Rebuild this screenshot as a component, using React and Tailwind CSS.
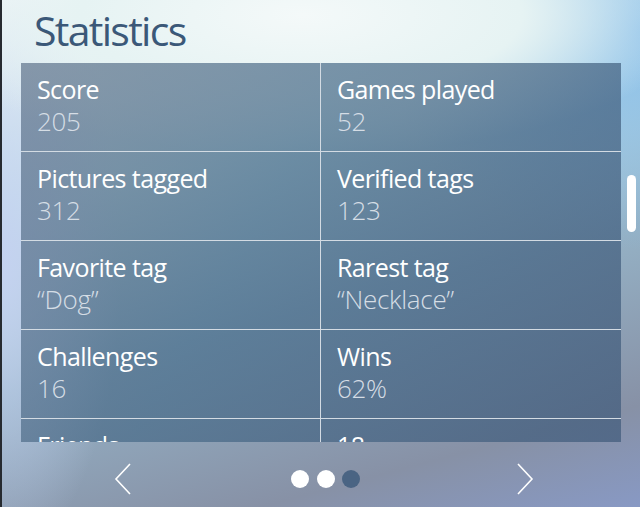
import React from 'react';

const stats = [
  ['Score', '205', 'Games played', '52'],
  ['Pictures tagged', '312', 'Verified tags', '123'],
  ['Favorite tag', '\u201cDog\u201d', 'Rarest tag', '\u201cNecklace\u201d'],
  ['Challenges', '16', 'Wins', '62%'],
  ['Friends', '', '18', ''],
];

const Cell = ({ label, value, last }) => (
  <div className={`h-[88px] px-4 pt-[12px] ${last ? '' : 'border-r border-[#d3dbe3]'}`}>
    <div className="text-[25px] leading-[29px] text-white tracking-[-0.6px]">{label}</div>
    <div className="mt-[2px] text-[26px] leading-[30px] font-light text-[#d5dde5] tracking-[-0.3px]">{value}</div>
  </div>
);

const App = () => {
  return (
    <div
      className="relative w-[640px] h-[507px] overflow-hidden border-l-2 border-[#262a30] flex flex-col bg-[radial-gradient(ellipse_400px_140px_at_300px_15px,#f4f9f9_0%,#e6f3f3_55%,transparent_100%),radial-gradient(ellipse_260px_220px_at_640px_30px,#86bde9_0%,transparent_100%),radial-gradient(ellipse_120px_300px_at_0px_260px,#c4d2f0_0%,transparent_100%),linear-gradient(165deg,#f4f7f8_0%,#c8e4ea_32%,#95b2c6_58%,#8791a6_85%,#8899c4_100%)]"
      style={{ fontFamily: '"Open Sans", "Noto Sans", sans-serif' }}
    >
      <div className="h-[63px] pl-[32px] pt-[5px]">
        <h1 className="text-[41px] leading-[50px] text-[#3b5878] tracking-[-1.7px]">Statistics</h1>
      </div>

      <div className="mx-[19px] h-[379px] overflow-hidden bg-[linear-gradient(120deg,rgba(90,110,135,0.68)_0%,rgba(70,105,135,0.7)_40%,rgba(66,92,124,0.74)_100%)]">
        {stats.map(([l1, v1, l2, v2], i) => (
          <div key={i} className="grid grid-cols-2 border-b border-[#d3dbe3]">
            <Cell label={l1} value={v1} />
            <Cell label={l2} value={v2} last />
          </div>
        ))}
      </div>

      <div className="flex-1 flex items-center pl-[111px] pt-[8px]">
        <svg width="20" height="32" viewBox="0 0 20 32" fill="none" stroke="white" strokeWidth="1.6">
          <path d="M17 1L3 16l14 15" />
        </svg>
        <div className="ml-[158px] flex items-center gap-[7.5px]">
          <span className="w-[18px] h-[18px] rounded-full bg-white" />
          <span className="w-[18px] h-[18px] rounded-full bg-white" />
          <span className="w-[18px] h-[18px] rounded-full bg-[#4a6483]" />
        </div>
        <svg className="ml-[155px]" width="20" height="32" viewBox="0 0 20 32" fill="none" stroke="white" strokeWidth="1.6">
          <path d="M3 1l14 15L3 31" />
        </svg>
      </div>

      <div className="absolute left-[625px] top-[175px] w-[9px] h-[57px] rounded-full bg-white" />
    </div>
  );
};

export default App;
